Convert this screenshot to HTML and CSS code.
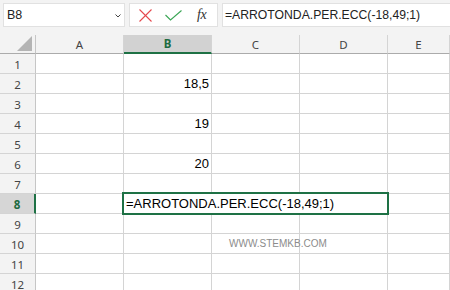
FILE: index.html
```html
<!DOCTYPE html>
<html lang="it">

<head>
    <meta charset="UTF-8">
    <meta name="viewport" content="width=device-width, initial-scale=1.0">
    <title>ARROTONDA.PER.ECC</title>
    <link rel="stylesheet" href="styles.css">
</head>

<body>
    <div class="toolbar">
        <div class="name-box">
            <span>B8</span>
            <svg class="chevron" width="6" height="4" viewBox="0 0 6 4">
                <polyline points="0.5,0.5 3,3 5.5,0.5" fill="none" stroke="#444" stroke-width="1" />
            </svg>
        </div>
        <div class="buttons">
            <svg class="btn-cancel" width="13" height="13" viewBox="0 0 13 13">
                <line x1="0.5" y1="0.5" x2="12.5" y2="12.5" stroke="#e5484d" stroke-width="1.1" />
                <line x1="12.5" y1="0.5" x2="0.5" y2="12.5" stroke="#e5484d" stroke-width="1.1" />
            </svg>
            <svg class="btn-enter" width="17" height="11" viewBox="0 0 17 11">
                <polyline points="0.5,5 5.5,10 16.5,0.5" fill="none" stroke="#3aa655" stroke-width="1.1" />
            </svg>
            <span class="btn-fx">fx</span>
        </div>
        <div class="formula">=ARROTONDA.PER.ECC(-18,49;1)</div>
    </div>

    <div class="sheet">
        <div class="row head">
            <div class="corner"><span class="triangle"></span></div>
            <div>A</div>
            <div class="active">B</div>
            <div>C</div>
            <div>D</div>
            <div>E</div>
        </div>
        <div class="row">
            <div class="num">1</div><div></div><div></div><div></div><div></div><div></div>
        </div>
        <div class="row">
            <div class="num">2</div><div></div><div class="value">18,5</div><div></div><div></div><div></div>
        </div>
        <div class="row">
            <div class="num">3</div><div></div><div></div><div></div><div></div><div></div>
        </div>
        <div class="row">
            <div class="num">4</div><div></div><div class="value">19</div><div></div><div></div><div></div>
        </div>
        <div class="row">
            <div class="num">5</div><div></div><div></div><div></div><div></div><div></div>
        </div>
        <div class="row">
            <div class="num">6</div><div></div><div class="value">20</div><div></div><div></div><div></div>
        </div>
        <div class="row">
            <div class="num">7</div><div></div><div></div><div></div><div></div><div></div>
        </div>
        <div class="row">
            <div class="num active">8</div><div></div>
            <div class="editing">
                <div class="editor">=ARROTONDA.PER.ECC(-18,49;1)</div>
            </div>
            <div></div><div></div><div></div>
        </div>
        <div class="row">
            <div class="num">9</div><div></div><div></div><div></div><div></div><div></div>
        </div>
        <div class="row">
            <div class="num">10</div><div></div><div></div><div class="watermark">WWW.STEMKB.COM</div><div></div><div></div>
        </div>
        <div class="row">
            <div class="num">11</div><div></div><div></div><div></div><div></div><div></div>
        </div>
        <div class="row">
            <div class="num">12</div><div></div><div></div><div></div><div></div><div></div>
        </div>
    </div>
</body>

</html>
```

FILE: styles.css
```css
body {
    margin: 0;
    width: 450px;
    height: 290px;
    overflow: hidden;
    background: #ffffff;
    font-family: "Liberation Sans", Arial, sans-serif;
}

/* barra della formula */
.toolbar {
    display: flex;
    gap: 4px;
    height: 35px;
    padding: 3px 0 0 3px;
    box-sizing: border-box;
    background: #f3f3f3;
}

.name-box,
.buttons,
.formula {
    height: 24px;
    box-sizing: border-box;
    background: #ffffff;
    border: 1px solid #e1e1e1;
}

.name-box {
    width: 122px;
    display: flex;
    align-items: center;
    justify-content: space-between;
    padding: 0 3px 0 3px;
    font-size: 12.5px;
    color: #222;
}

.chevron {
    margin-top: 1px;
}

.buttons {
    width: 89px;
    display: flex;
    align-items: center;
    padding-left: 9px;
}

.btn-cancel {
    margin-right: 13px;
}

.btn-enter {
    margin-right: 15px;
    margin-top: 1px;
}

.btn-fx {
    font-family: "Liberation Serif", "Times New Roman", serif;
    font-style: italic;
    font-size: 14px;
    color: #333;
    letter-spacing: -0.5px;
}

.formula {
    flex: 1;
    border-right: none;
    padding-left: 2px;
    display: flex;
    align-items: center;
    font-size: 12.2px;
    color: #222;
    white-space: nowrap;
}

/* griglia del foglio */
.row {
    display: grid;
    grid-template-columns: 36px 88px 88px 88px 88px 1fr;
    height: 20px;
}

.row > div {
    box-sizing: border-box;
    border-right: 1px solid #d4d4d4;
    border-bottom: 1px solid #d4d4d4;
    font-size: 13px;
    color: #000;
    white-space: nowrap;
}

.row.head {
    height: 19px;
}

.row.head > div {
    background: #f3f3f3;
    border-bottom-color: #ababab;
    display: flex;
    align-items: center;
    justify-content: center;
    font-family: "Noto Sans", "Open Sans", sans-serif;
    font-size: 11.5px;
    color: #444;
}

.row.head > .active {
    background: #d2d2d2;
    color: #1e6b41;
    font-weight: bold;
    border-bottom: 2px solid #1e7145;
}

.row.head > .corner {
    border-right-color: #c6c6c6;
    justify-content: flex-end;
    align-items: flex-end;
    padding: 0 3px 2px 0;
}

.triangle {
    width: 15px;
    height: 15px;
    background: #b4b4b4;
    clip-path: polygon(100% 0, 100% 100%, 0 100%);
}

.row > .num {
    background: #f3f3f3;
    border-right-color: #c6c6c6;
    display: flex;
    align-items: center;
    justify-content: center;
    padding-top: 1px;
    font-family: "Noto Sans", "Open Sans", sans-serif;
    font-size: 11.5px;
    color: #444;
}

.row > .num.active {
    background: #d6d6d6;
    color: #1e6b41;
    font-weight: bold;
    border-right: 2px solid #1e7145;
}

.value {
    display: flex;
    align-items: flex-end;
    justify-content: flex-end;
    padding: 0 2px 2px 0;
}

.editing {
    position: relative;
}

.editor {
    position: absolute;
    top: -2px;
    left: -2px;
    width: 267px;
    height: 23px;
    box-sizing: border-box;
    border: 2px solid #1e7145;
    background: #ffffff;
    display: flex;
    align-items: flex-end;
    padding: 0 0 2px 2px;
    font-size: 13px;
    z-index: 2;
}

.row > .watermark {
    display: flex;
    align-items: center;
    padding-left: 17px;
    overflow: visible;
    font-size: 10px;
    color: #8c8c8c;
    position: relative;
    z-index: 1;
}
```
